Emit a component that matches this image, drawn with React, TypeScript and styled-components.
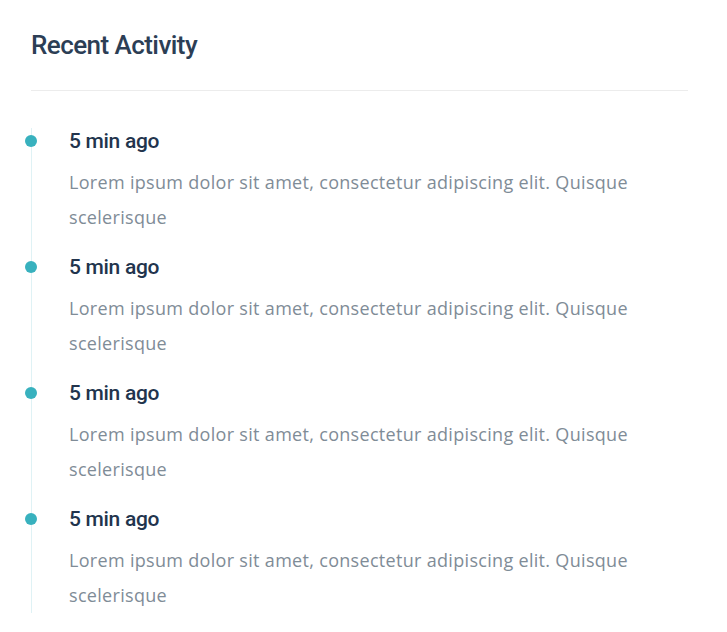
import React from "react";
import styled, { createGlobalStyle } from "styled-components";

const Global = createGlobalStyle`
  html, body { margin: 0; padding: 0; background: #ffffff; }
  * { box-sizing: border-box; }
`;

const Card = styled.div`
  width: 727px;
  padding: 30px 39px 0 31px;
  background: #ffffff;
`;

const Title = styled.h4`
  margin: 0;
  font-family: "Roboto", "Liberation Sans", sans-serif;
  font-weight: 500;
  font-size: 26px;
  line-height: 30px;
  color: #2c3e55;
  letter-spacing: -0.55px;
`;

const Divider = styled.div`
  height: 1px;
  background: #ececec;
  margin: 30px 0 37px;
`;

const Timeline = styled.ul`
  list-style: none;
  margin: 0;
  padding: 0;
  border-left: 1px solid #dff2f5;
  display: flex;
  flex-direction: column;
  gap: 19px;
`;

const Item = styled.li`
  position: relative;
  padding-left: 37px;
`;

const Dot = styled.span`
  position: absolute;
  left: -7px;
  top: 7px;
  width: 12px;
  height: 12px;
  border-radius: 50%;
  background: #38b1be;
`;

const Time = styled.div`
  font-family: "Roboto", "Liberation Sans", sans-serif;
  font-weight: 500;
  font-size: 21px;
  line-height: 26px;
  letter-spacing: -0.3px;
  color: #22344d;
  margin-bottom: 11px;
`;

const Text = styled.p`
  margin: 0;
  font-family: "Open Sans", "Liberation Sans", sans-serif;
  font-size: 18px;
  line-height: 35px;
  letter-spacing: 0.31px;
  color: #7f8c97;
`;

const items = Array.from({ length: 4 }, () => ({
  time: "5 min ago",
  text: "Lorem ipsum dolor sit amet, consectetur adipiscing elit. Quisque scelerisque",
}));

export default function App() {
  return (
    <>
      <Global />
      <Card>
        <Title>Recent Activity</Title>
        <Divider />
        <Timeline>
          {items.map((it, i) => (
            <Item key={i}>
              <Dot />
              <Time>{it.time}</Time>
              <Text>{it.text}</Text>
            </Item>
          ))}
        </Timeline>
      </Card>
    </>
  );
}
